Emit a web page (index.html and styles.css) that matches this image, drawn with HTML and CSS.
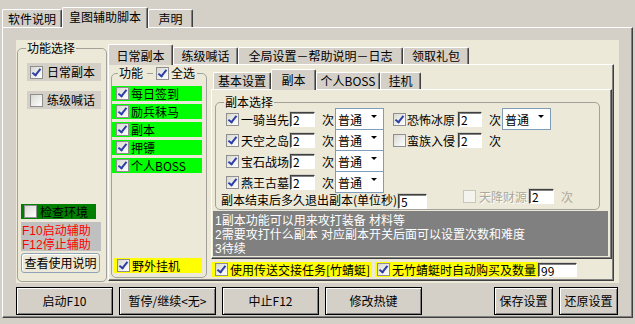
FILE: index.html
```html
<!DOCTYPE html>
<html lang="zh-CN">
<head>
    <meta charset="UTF-8">
    <meta name="viewport" content="width=device-width, initial-scale=1.0">
    <title>皇图辅助脚本</title>
    <link rel="stylesheet" href="styles.css">
</head>
<body>

<div class="window">
    <div class="top-tabs">
        <div class="tab tab-doc">软件说明</div>
        <div class="tab tab-main active">皇图辅助脚本</div>
        <div class="tab tab-notice">声明</div>
    </div>

    <div class="main-panel">
        <div class="cream">
            <!-- 功能选择 -->
            <fieldset class="group func-select">
                <legend>功能选择</legend>
                <div class="select-body">
                    <div class="opt-row"><span class="cb on"></span>日常副本</div>
                    <div class="opt-row second"><span class="cb"></span>练级喊话</div>
                    <div class="check-env"><span class="cb"></span>检查环境</div>
                    <div class="hotkey-note">
                        <div>F10启动辅助</div>
                        <div>F12停止辅助</div>
                    </div>
                    <div class="help-btn">查看使用说明</div>
                </div>
            </fieldset>

            <div class="tabctl daily">
                <div class="tabstrip">
                    <div class="tab tab-daily active">日常副本</div>
                    <div class="tab tab-shout">练级喊话</div>
                    <div class="tab tab-global">全局设置－帮助说明－日志</div>
                    <div class="tab tab-gift">领取礼包</div>
                </div>
                <div class="tabpanel daily-panel">
                    <fieldset class="group func">
                        <legend><span>功能</span><span class="dash"></span><span class="cb on"></span><span class="all">全选</span></legend>
                        <div class="func-body">
                            <div class="green"><span class="cb on"></span>每日签到</div>
                            <div class="green"><span class="cb on"></span>励兵秣马</div>
                            <div class="green"><span class="cb on"></span>副本</div>
                            <div class="green"><span class="cb on"></span>押镖</div>
                            <div class="green"><span class="cb on"></span>个人BOSS</div>
                            <div class="wild"><span class="cb on"></span>野外挂机</div>
                        </div>
                    </fieldset>

                    <div class="daily-right">
                        <div class="tabctl dungeon">
                            <div class="tabstrip">
                                <div class="tab tab-basic">基本设置</div>
                                <div class="tab tab-dungeon active">副本</div>
                                <div class="tab tab-boss">个人BOSS</div>
                                <div class="tab tab-idle">挂机</div>
                            </div>
                            <div class="tabpanel dungeon-panel">
                                <fieldset class="group dg-group">
                                    <legend>副本选择</legend>
                                    <div class="dg-grid">
                                        <div class="dg-col">
                                            <div class="dg-row"><span class="cb on"></span><span class="name">一骑当先</span><span class="num">2</span><span class="times">次</span><span class="sel">普通</span></div>
                                            <div class="dg-row"><span class="cb on"></span><span class="name">天空之岛</span><span class="num">2</span><span class="times">次</span><span class="sel">普通</span></div>
                                            <div class="dg-row"><span class="cb on"></span><span class="name">宝石战场</span><span class="num">2</span><span class="times">次</span><span class="sel">普通</span></div>
                                            <div class="dg-row"><span class="cb on"></span><span class="name">燕王古墓</span><span class="num">2</span><span class="times">次</span><span class="sel">普通</span></div>
                                        </div>
                                        <div class="dg-col right">
                                            <div class="dg-row"><span class="cb on"></span><span class="name">恐怖冰原</span><span class="num">2</span><span class="times">次</span><span class="sel">普通</span></div>
                                            <div class="dg-row"><span class="cb"></span><span class="name">蛮族入侵</span><span class="num">2</span><span class="times">次</span></div>
                                        </div>
                                    </div>
                                    <div class="dg-exit">
                                        <span class="exit-label">副本结束后多久退出副本(单位秒)</span>
                                        <span class="num exit-num">5</span>
                                        <div class="bonus">
                                            <span class="cb off"></span><span class="name">天降财源</span><span class="num">2</span><span class="times">次</span>
                                        </div>
                                    </div>
                                </fieldset>
                                <div class="info">
                                    <div>1副本功能可以用来攻打装备 材料等</div>
                                    <div>2需要攻打什么副本 对应副本开关后面可以设置次数和难度</div>
                                    <div>3待续</div>
                                </div>
                            </div>
                        </div>

                        <div class="yellow-row">
                            <div class="yellow y-teleport"><span class="cb on"></span>使用传送交接任务[竹蜻蜓]</div>
                            <div class="yellow y-buy"><span class="cb on"></span>无竹蜻蜓时自动购买及数量</div>
                            <span class="num buy-num">99</span>
                        </div>
                    </div>
                </div>
            </div>
        </div>

        <div class="bottom-bar">
            <div class="btn">启动F10</div>
            <div class="btn">暂停/继续&lt;无&gt;</div>
            <div class="btn">中止F12</div>
            <div class="btn">修改热键</div>
            <div class="btn small push">保存设置</div>
            <div class="btn small">还原设置</div>
        </div>
    </div>
</div>

</body>
</html>
```

FILE: styles.css
```css
body {
    margin: 0;
    background-color: #d4d0c8;
    font-family: "Noto Sans CJK SC", "Noto Sans", sans-serif;
    font-size: 12px;
    line-height: 14px;
    color: #000;
}
.window {
    width: 635px;
    height: 324px;
    overflow: hidden;
}

/* tabs */
.tab {
    box-sizing: border-box;
    background-color: #d4d0c8;
    border-top: 1px solid #fff;
    border-left: 1px solid #fff;
    border-right: 1px solid #404040;
    box-shadow: inset -1px 0 #808080;
    border-radius: 2px 2px 0 0;
    text-align: center;
    white-space: nowrap;
    height: 17px;
    line-height: 16px;
}
.tab.active {
    position: relative;
    z-index: 1;
    height: 21px;
    margin-bottom: -1px;
    line-height: 19px;
}
.tabstrip {
    display: flex;
    align-items: flex-end;
    height: 20px;
}
.tabpanel {
    box-sizing: border-box;
    border: 1px solid;
    border-color: #fff #404040 #404040 #fff;
    box-shadow: inset -1px -1px #808080;
}

.top-tabs {
    display: flex;
    align-items: flex-end;
    height: 27px;
    padding-left: 2px;
}
.top-tabs .tab {
    height: 18px;
    line-height: 17px;
}
.top-tabs .tab.active {
    height: 21px;
    line-height: 18px;
}
.tab-doc { width: 60px; }
.tab-main { width: 86px; }
.tab-notice { width: 45px; }

.main-panel {
    width: 631px;
    height: 291px;
    margin-left: 2px;
    box-sizing: border-box;
    border: 1px solid;
    border-color: #fff #404040 #404040 #fff;
    box-shadow: inset -1px -1px #808080;
    padding: 12px 0 0 13px;
}
.cream {
    display: flex;
    align-items: flex-start;
    width: 603px;
    height: 243px;
    box-sizing: border-box;
    padding: 1px 0 0 1px;
    background-color: #ece9d8;
}

/* group boxes */
.group {
    margin: 0;
    padding: 0;
    min-width: 0;
    box-sizing: border-box;
    border: 1px solid #a3a29a;
    border-radius: 5px;
}
.group legend {
    padding: 0 1px;
    margin-left: 8px;
    line-height: 14px;
}

/* checkbox */
.cb {
    position: relative;
    flex: none;
    width: 13px;
    height: 13px;
    box-sizing: border-box;
    border: 1px solid #8f8f8f;
    background: linear-gradient(135deg, #d8d8d2, #fff);
}
.cb.on::after {
    content: "";
    position: absolute;
    left: 3px;
    top: 0px;
    width: 3px;
    height: 7px;
    border: solid #2d3fa6;
    border-width: 0 2px 2px 0;
    transform: rotate(38deg);
}
.cb.off {
    border-color: #c9c7ba;
    background: #f4f3ee;
}

/* sunken text box */
.num {
    flex: none;
    box-sizing: border-box;
    height: 15px;
    padding-left: 2px;
    background-color: #fff;
    border: 1px solid;
    border-color: #404040 #fff #fff #404040;
    box-shadow: inset 1px 1px #808080, -1px -1px #d4d0c8;
    line-height: 13px;
}

/* 功能选择 */
.func-select {
    width: 90px;
    height: 241px;
}
.select-body {
    display: flex;
    flex-direction: column;
    height: 226px;
}
.opt-row {
    display: flex;
    align-items: center;
    gap: 4px;
    width: 74px;
    height: 18px;
    box-sizing: border-box;
    padding-left: 3px;
    margin: 8px 0 0 9px;
    background-color: #d4d0c8;
}
.opt-row.second {
    margin-top: 10px;
}
.check-env {
    display: flex;
    align-items: center;
    gap: 3px;
    width: 75px;
    height: 15px;
    box-sizing: border-box;
    padding-left: 3px;
    margin: auto 0 0 3px;
    background-color: #008000;
}
.hotkey-note {
    width: 80px;
    height: 29px;
    box-sizing: border-box;
    padding: 2px 0 0 1px;
    margin: 3px 0 0 3px;
    background-color: #c0c0c0;
    color: #f00;
    font-family: "Liberation Sans", "Noto Sans CJK SC", sans-serif;
}
.help-btn {
    width: 79px;
    height: 20px;
    box-sizing: border-box;
    margin: 2px 0 8px 3px;
    border: 1px solid #8fa3b8;
    border-radius: 3px;
    box-shadow: inset 1px 1px #fff;
    text-align: center;
    line-height: 18px;
}

/* 日常副本 tab control */
.daily {
    width: 506px;
    margin: 3px 0 0 1px;
}
.tab-daily { width: 65px; }
.tab-shout { width: 65px; }
.tab-global { width: 165px; }
.tab-gift { width: 66px; }
.tab-daily.active { line-height: 21px; }
.daily-panel {
    display: flex;
    align-items: flex-start;
    height: 217px;
}

.func {
    width: 96px;
    height: 212px;
    margin: 1px 0 0 2px;
}
.func legend {
    display: flex;
    align-items: center;
    height: 14px;
    margin-left: 6px;
}
.func .dash {
    width: 6px;
    height: 1px;
    margin: 0 3px 0 4px;
    background-color: #a3a29a;
}
.func .all {
    margin: 0 1px 0 2px;
}
.func-body {
    display: flex;
    flex-direction: column;
    gap: 3px;
    height: 197px;
    padding-top: 6px;
    box-sizing: border-box;
}
.green {
    display: flex;
    align-items: center;
    gap: 2px;
    width: 90px;
    height: 15px;
    box-sizing: border-box;
    padding-left: 4px;
    background-color: #0f0;
}
.wild {
    display: flex;
    align-items: center;
    gap: 2px;
    width: 88px;
    height: 15px;
    box-sizing: border-box;
    padding-left: 3px;
    margin: auto 0 4px 2px;
    background-color: #ff0;
}

.daily-right {
    margin-left: 4px;
}

/* 副本 tab control */
.dungeon {
    width: 401px;
    margin-top: 4px;
}
.dungeon .tabstrip {
    padding-left: 2px;
}
.tab-basic { width: 58px; }
.tab-dungeon { width: 45px; }
.tab-boss { width: 64px; }
.tab-idle { width: 41px; }
.dungeon-panel {
    height: 170px;
}
.dg-group {
    width: 385px;
    height: 114px;
    margin: 6px 0 0 3px;
}
.dg-group legend {
    line-height: 12px;
}
.dg-grid {
    display: flex;
    gap: 9px;
    padding-left: 10px;
}
.dg-row {
    display: flex;
    align-items: flex-start;
    height: 21px;
}
.dg-row .cb {
    margin-top: 5px;
}
.dg-row .name {
    width: 48px;
    margin: 5px 0 0 2px;
}
.dg-row .num {
    width: 25px;
    margin: 4px 0 0 1px;
}
.dg-row .times {
    margin: 5px 0 0 7px;
}
.right .dg-row .name {
    margin-left: 1px;
}
.right .dg-row .num {
    width: 24px;
    margin-left: 3px;
}
.sel {
    position: relative;
    flex: none;
    width: 49px;
    height: 22px;
    box-sizing: border-box;
    margin-left: 1px;
    padding: 4px 0 0 2px;
    border: 1px solid #7f9db9;
    background-color: #fff;
}
.sel::after {
    content: "";
    position: absolute;
    right: 6px;
    top: 6px;
    border-left: 3px solid transparent;
    border-right: 3px solid transparent;
    border-top: 3px solid #000;
}

.dg-exit {
    display: flex;
    align-items: flex-start;
    height: 17px;
    padding-left: 5px;
}
.exit-label {
    width: 177px;
    margin-top: 1px;
    white-space: nowrap;
}
.exit-num {
    width: 29px;
    margin-top: 2px;
}
.bonus {
    display: flex;
    align-items: flex-start;
    margin-left: 36px;
    color: #aca899;
}
.bonus .cb {
    margin-top: -2px;
}
.bonus .name {
    margin: -2px 0 0 3px;
    text-shadow: 1px 1px #fff;
}
.bonus .num {
    width: 25px;
    margin: -3px 0 0 2px;
    color: #000;
}
.bonus .times {
    margin: -2px 0 0 7px;
}

.info {
    width: 395px;
    height: 45px;
    box-sizing: border-box;
    margin: 1px 0 0 1px;
    padding: 3px 2px 0;
    background-color: #808080;
    color: #fff;
    font-family: "Liberation Sans", "Noto Sans CJK SC", sans-serif;
}

.yellow-row {
    display: flex;
    align-items: flex-start;
    margin: 3px 0 0 1px;
}
.yellow {
    display: flex;
    align-items: center;
    gap: 2px;
    height: 15px;
    box-sizing: border-box;
    background-color: #ff0;
    white-space: nowrap;
}
.y-teleport {
    width: 160px;
    padding-left: 3px;
}
.y-buy {
    width: 162px;
    padding-left: 2px;
    margin-left: 3px;
}
.buy-num {
    width: 39px;
    height: 14px;
    margin: 1px 0 0 1px;
}

/* bottom buttons */
.bottom-bar {
    display: flex;
    gap: 6px;
    width: 602px;
    margin-top: 4px;
}
.btn {
    width: 97px;
    height: 28px;
    box-sizing: border-box;
    border: 1px solid #000;
    background-color: #d4d0c8;
    box-shadow: inset 1px 1px #fff, inset -1px -1px #808080;
    text-align: center;
    line-height: 26px;
    white-space: nowrap;
}
.btn.small {
    width: 59px;
}
.push {
    margin-left: auto;
}
```
